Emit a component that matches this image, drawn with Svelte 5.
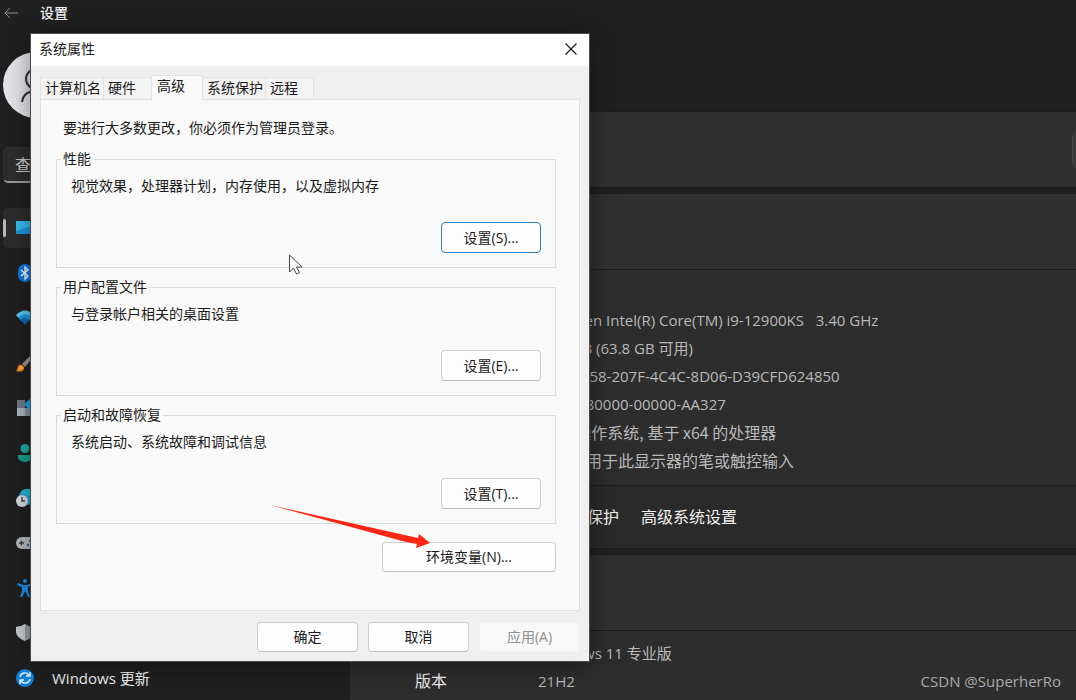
<script lang="ts">
    type Row = { term: string; value: string; latin?: boolean };

    const navItems = [
        { icon: 'system', label: '系统' },
        { icon: 'bluetooth', label: '蓝牙和其他设备' },
        { icon: 'network', label: '网络和 Internet' },
        { icon: 'brush', label: '个性化' },
        { icon: 'apps', label: '应用' },
        { icon: 'account', label: '帐户' },
        { icon: 'time', label: '时间和语言' },
        { icon: 'games', label: '游戏' },
        { icon: 'access', label: '辅助功能' },
        { icon: 'shield', label: '隐私和安全性' },
        { icon: 'update', label: 'Windows 更新', caption: true }
    ];

    const deviceRows: Row[] = [
        { term: '', value: '' },
        { term: '', value: '12th Gen Intel(R) Core(TM) i9-12900KS   3.40 GHz', latin: true },
        { term: '', value: '64.0 GB (63.8 GB 可用)', latin: true },
        { term: '', value: '00000058-207F-4C4C-8D06-D39CFD624850', latin: true },
        { term: '', value: '00330-80000-00000-AA327', latin: true },
        { term: '', value: '64 位操作系统, 基于 x64 的处理器' },
        { term: '', value: '没有可用于此显示器的笔或触控输入' }
    ];

    const windowsRows: Row[] = [
        { term: '', value: 'Windows 11 专业版', latin: true },
        { term: '版本', value: '21H2', latin: true }
    ];

    const tabs = ['计算机名', '硬件', '高级', '系统保护', '远程'];

    const groups = [
        { title: '性能', text: '视觉效果，处理器计划，内存使用，以及虚拟内存', button: '设置(S)...' },
        { title: '用户配置文件', text: '与登录帐户相关的桌面设置', button: '设置(E)...' },
        { title: '启动和故障恢复', text: '系统启动、系统故障和调试信息', button: '设置(T)...' }
    ];

    let activeNav = $state('system');
    let activeTab = $state('高级');
    let focused = $state('设置(S)...');
    let search = $state('');
</script>

{#snippet specs(rows: Row[])}
    <dl>
        {#each rows as row}
            <div class="row">
                <dt>{row.term}</dt>
                <dd class:latin={row.latin}>{row.value}</dd>
            </div>
        {/each}
    </dl>
{/snippet}

<svg class="sprites" aria-hidden="true">
    <symbol id="system" viewBox="0 0 18 18">
        <path d="M0 2h18v13H0z" fill="#1679c8" />
        <path d="M0 2h18v8L0 14z" fill="#35b9ea" />
        <path d="M0 12l18-6v9H0z" fill="#1c94d8" />
    </symbol>
    <symbol id="bluetooth" viewBox="0 0 18 18">
        <rect x="2" y="0" width="14" height="18" rx="7" fill="#0a78e0" />
        <path d="M5 6l7 6-3 3V3l3 3-7 6" fill="none" stroke="#fff" stroke-width="1.3" />
    </symbol>
    <symbol id="network" viewBox="0 0 18 18">
        <path d="M0 6q9-9 18 0l-2.500 3h-13z" fill="#5cc8f5" />
        <path d="M2 8.500q7-7 14 0L13 12H5z" fill="#2094dd" />
        <path d="M4.500 11q4.500-4 9 0L9 15.500z" fill="#0c66b4" />
    </symbol>
    <symbol id="brush" viewBox="0 0 18 18">
        <path d="M6 10L16 0l2 2-9 11z" fill="#969696" />
        <path d="M0 17c2-1 1-4 3-6 2-1 6 1 5 4-1 3-6 3-8 2z" fill="#f38a17" />
        <path d="M2 16c2-1 2-3 3-4 2 0 2 2 1 3z" fill="#ffc14a" />
    </symbol>
    <symbol id="apps" viewBox="0 0 18 18">
        <path d="M1 1h8v8H1z" fill="#6e7884" />
        <path d="M1 9h8v8H1z" fill="#aeb4bb" />
        <path d="M9 9h7v8H9z" fill="#84909b" />
        <path d="M8 5l6-5 5 5-6 6z" fill="#21a5e4" />
    </symbol>
    <symbol id="account" viewBox="0 0 18 18">
        <circle cx="9" cy="4.500" r="4.500" fill="#1aaa9d" />
        <path d="M2 11h14v2a7 5 0 0 1-14 0z" fill="#159e8b" />
    </symbol>
    <symbol id="time" viewBox="0 0 18 18">
        <circle cx="11" cy="8" r="8" fill="#1c9ed6" />
        <path d="M5 3c3-4 9-4 12 0l-5 4z" fill="#25bfd7" />
        <circle cx="6" cy="12" r="6" fill="#d9dcdf" />
        <path d="M6 8v4h3" fill="none" stroke="#3a3a3a" stroke-width="1.300" />
    </symbol>
    <symbol id="games" viewBox="0 0 18 18">
        <rect x="0" y="3" width="22" height="12" rx="6" fill="#b7bbc0" />
        <path d="M3 9h5M5.500 6.500v5" stroke="#444" stroke-width="1.500" />
        <circle cx="12" cy="11" r="1.300" fill="#2669a8" />
        <circle cx="14" cy="7" r="1.300" fill="#2669a8" />
    </symbol>
    <symbol id="access" viewBox="0 0 18 18">
        <circle cx="9" cy="2" r="2" fill="#1c8fea" />
        <path d="M2 4l5 2h4l5-2 1 2-5 2v4l2 6h-2l-3-6-3 6H4l2-6V8L1 6z" fill="#1c8fea" />
    </symbol>
    <symbol id="shield" viewBox="0 0 18 18">
        <path d="M0 3q5 0 9-3 4 3 9 3v5q-1 6-9 9-8-3-9-9z" fill="#9b9fa4" />
        <path d="M0 3q5 0 9-3v17q-8-3-9-9z" fill="#c9ccd0" />
    </symbol>
    <symbol id="update" viewBox="0 0 18 18">
        <circle cx="9" cy="9" r="9" fill="#0f82dc" />
        <path d="M4 8a5 5 0 0 1 9-2M14 3v4h-4M14 10a5 5 0 0 1-9 2M4 15v-4h4" fill="none" stroke="#e8f4ff" stroke-width="1.400" />
    </symbol>
</svg>

<div class="desktop">
    <header class="settings-bar">
        <button class="back" aria-label="返回">
            <svg width="14" height="12" viewBox="0 0 14 12"><path d="M14 6H1M6 1L1 6l5 5" fill="none" stroke="#8c8c8c" /></svg>
        </button>
        <span>设置</span>
    </header>

    <div class="settings">
        <aside>
            <div class="avatar">
                <svg width="66" height="66" viewBox="0 0 66 66" fill="none" stroke="#303236" stroke-width="2">
                    <circle cx="33" cy="27" r="10" />
                    <path d="M19 50c1-7 6-11 14-11s13 4 14 11" />
                </svg>
            </div>
            <input type="text" placeholder="查找设置" aria-label="查找设置" bind:value={search} />
            <nav>
                {#each navItems as item}
                    <button class="nav-item" class:active={activeNav == item.icon} aria-label={item.label} onclick={() => activeNav = item.icon}>
                        <svg width="18" height="18"><use href="#{item.icon}" /></svg>
                        {#if item.caption}
                            {item.label}
                        {/if}
                    </button>
                {/each}
            </nav>
        </aside>

        <main>
            <section class="card head rename">
                <button aria-label="重命名这台电脑"></button>
            </section>
            <section class="card">
                <div class="head"></div>
                {@render specs(deviceRows)}
                <div class="links">
                    <a href="#protection">系统保护</a>
                    <a href="#advanced">高级系统设置</a>
                </div>
            </section>
            <section class="card">
                <div class="head"></div>
                {@render specs(windowsRows)}
            </section>
        </main>
    </div>

    <div class="dialog" role="dialog" aria-labelledby="dialog-title">
        <div class="title-bar">
            <span id="dialog-title">系统属性</span>
            <button class="close" aria-label="关闭">
                <svg width="12" height="12" viewBox="0 0 12 12"><path d="M0.500 0.500l11 11M11.500 0.500l-11 11" stroke="#1a1a1a" stroke-width="1.200" /></svg>
            </button>
        </div>

        <div class="content">
            <div class="tabs" role="tablist">
                {#each tabs as tab}
                    <button role="tab" class="tab" class:selected={activeTab == tab} aria-selected={activeTab == tab} onclick={() => activeTab = tab}>{tab}</button>
                {/each}
            </div>

            <div class="panel" role="tabpanel">
                <p class="intro">要进行大多数更改，你必须作为管理员登录。</p>
                {#each groups as group}
                    <fieldset>
                        <legend>{group.title}</legend>
                        <p>{group.text}</p>
                        <button class="btn" class:focused={focused == group.button} onclick={() => focused = group.button}>{group.button}</button>
                    </fieldset>
                {/each}
                <button class="btn env">环境变量(N)...</button>
            </div>

            <footer>
                <button class="btn">确定</button>
                <button class="btn">取消</button>
                <button class="btn" disabled>应用(A)</button>
            </footer>
        </div>
    </div>

    <svg class="arrow" width="160" height="46" viewBox="0 0 160 46">
        <path d="M0 0L148 33 149 29 160 38 146 43 147 39 136 37z" fill="#ff2613" />
    </svg>
    <svg class="pointer" width="14" height="22" viewBox="0 0 14 22">
        <path d="M0.500 1v17l4-4 3 6 3-1.500-3-5.500h5.500z" fill="#fff" stroke="#444" />
    </svg>
    <span class="watermark">CSDN @SuperherRo</span>
</div>

<style>
    :global(body) {
        background: #202020;
    }

    .desktop {
        position: relative;
        height: 100vh;
        overflow: hidden;
        background: #202020;
        color: #f0f0f0;
        font: 16px/20px "Open Sans", "Noto Sans CJK SC", sans-serif;
    }

    .sprites {
        position: absolute;
        width: 0;
        height: 0;
    }

    button, input {
        font: inherit;
        color: inherit;
        margin: 0;
        padding: 0;
        border: none;
        background: none;
    }

    p, dl, dd {
        margin: 0;
    }

    svg {
        display: block;
        flex: none;
    }

    .settings-bar {
        display: flex;
        align-items: center;
        gap: 22px;
        height: 26px;
        padding-left: 4px;
        font-size: 14px;
        font-weight: 500;
    }

    .settings {
        display: grid;
        grid-template-columns: 349px minmax(0, 1fr);
    }

    aside {
        display: flex;
        flex-direction: column;
        padding: 26px 3px 0;
    }

    .avatar {
        width: 66px;
        height: 66px;
        border-radius: 50%;
        background: #e2e4e7;
    }

    input {
        height: 36px;
        box-sizing: border-box;
        margin: 29px 0 25px;
        padding-left: 11px;
        border: 1px solid #303030;
        border-bottom: 2px solid #9a9a9a;
        border-radius: 5px;
        background: #2d2d2d;
    }

    input::placeholder {
        color: #c8c8c8;
        opacity: 1;
    }

    nav {
        display: flex;
        flex-direction: column;
        gap: 5px;
    }

    .nav-item {
        position: relative;
        display: flex;
        align-items: center;
        gap: 18px;
        height: 40px;
        padding-left: 13px;
        border-radius: 5px;
        font-size: 15px;
        text-align: left;
    }

    .active {
        background: #2d2d2d;
    }

    .active::before {
        content: "";
        position: absolute;
        left: 0;
        top: 11px;
        width: 3px;
        height: 18px;
        border-radius: 2px;
        background: #b8b8b8;
    }

    main {
        display: flex;
        flex-direction: column;
        gap: 5px;
        padding-top: 85px;
    }

    .card {
        border: 1px solid #1c1c1c;
        border-right: none;
        background: #2d2d2d;
    }

    .head {
        height: 75px;
        background: #303030;
    }

    /* the button runs past the window's right edge */
    .rename {
        display: flex;
        align-items: center;
        justify-content: flex-end;
    }

    .rename button {
        flex: none;
        width: 140px;
        height: 36px;
        margin-right: -136px;
        border: 1px solid #454545;
        border-radius: 5px;
        background: #3a3a3a;
    }

    dl {
        padding: 8px 0 11px 65px;
        border-top: 1px solid #1c1c1c;
    }

    .row {
        display: grid;
        grid-template-columns: 123px 1fr;
        min-height: 28px;
        line-height: 28px;
    }

    dd {
        color: #b9b9b9;
        font-family: "Noto Sans CJK SC", sans-serif;
        white-space: pre;
    }

    .latin {
        font-family: "Open Sans", "Noto Sans CJK SC", sans-serif;
        font-size: 15px;
    }

    .links {
        display: flex;
        align-items: center;
        gap: 22px;
        height: 62px;
        padding-left: 205px;
        border-top: 1px solid #1c1c1c;
        background: #2a2a2a;
    }

    a {
        color: #f0f0f0;
        text-decoration: none;
    }

    .dialog {
        position: absolute;
        left: 30px;
        top: 33px;
        box-sizing: border-box;
        width: 560px;
        border: 1px solid #4a4a4a;
        background: #efefef;
        color: #1a1a1a;
        font-size: 14px;
        box-shadow: 0 4px 24px rgba(0, 0, 0, 0.4);
    }

    .title-bar {
        display: flex;
        align-items: center;
        justify-content: space-between;
        height: 30px;
        padding: 0 12px 2px 8px;
        background: #fff;
    }

    .content {
        padding: 9px;
    }

    .tabs {
        display: flex;
        align-items: flex-end;
        height: 24px;
    }

    .tab {
        min-width: 48px;
        height: 22px;
        padding: 0 2px 2px 4px;
        border: 1px solid #e2e2e2;
        border-bottom: none;
        border-left-width: 0;
        background: #f3f3f3;
        text-align: left;
    }

    .tab:first-child {
        border-left-width: 1px;
    }

    .selected {
        position: relative;
        width: 51px;
        height: 25px;
        margin-bottom: -1px;
        padding: 0 1px 4px 5px;
        background: #f9f9f9;
    }

    .panel {
        display: flex;
        flex-direction: column;
        gap: 10px;
        padding: 18px 23px 38px 15px;
        border: 1px solid #e0e0e0;
        background: #f9f9f9;
    }

    .intro {
        padding: 0 0 2px 7px;
    }

    fieldset {
        display: flex;
        flex-direction: column;
        margin: 0;
        padding: 8px 14px 14px 4px;
        border: 1px solid #dcdcdc;
    }

    legend {
        padding: 0 2px;
        line-height: 18px;
    }

    fieldset p {
        padding: 0 0 26px 10px;
    }

    .btn {
        width: 100px;
        height: 31px;
        box-sizing: border-box;
        border: 1px solid #cfcfcf;
        border-bottom-color: #bcbcbc;
        border-radius: 4px;
        background: #fdfdfd;
    }

    fieldset .btn {
        align-self: flex-end;
    }

    .focused {
        border-color: #2f7fc1;
    }

    .env {
        align-self: flex-end;
        width: 174px;
        height: 30px;
        margin-top: 8px;
    }

    footer {
        display: flex;
        justify-content: flex-end;
        gap: 10px;
        padding-top: 11px;
    }

    footer .btn {
        width: 101px;
        height: 30px;
    }

    .btn:disabled {
        border-color: #f2f2f2;
        background: #f8f8f8;
        color: #8f8f8f;
    }

    .arrow {
        position: absolute;
        left: 270px;
        top: 505px;
    }

    .pointer {
        position: absolute;
        left: 289px;
        top: 254px;
    }

    .watermark {
        position: absolute;
        right: 15px;
        bottom: 9px;
        color: #aaa;
        font-size: 15px;
    }
</style>
